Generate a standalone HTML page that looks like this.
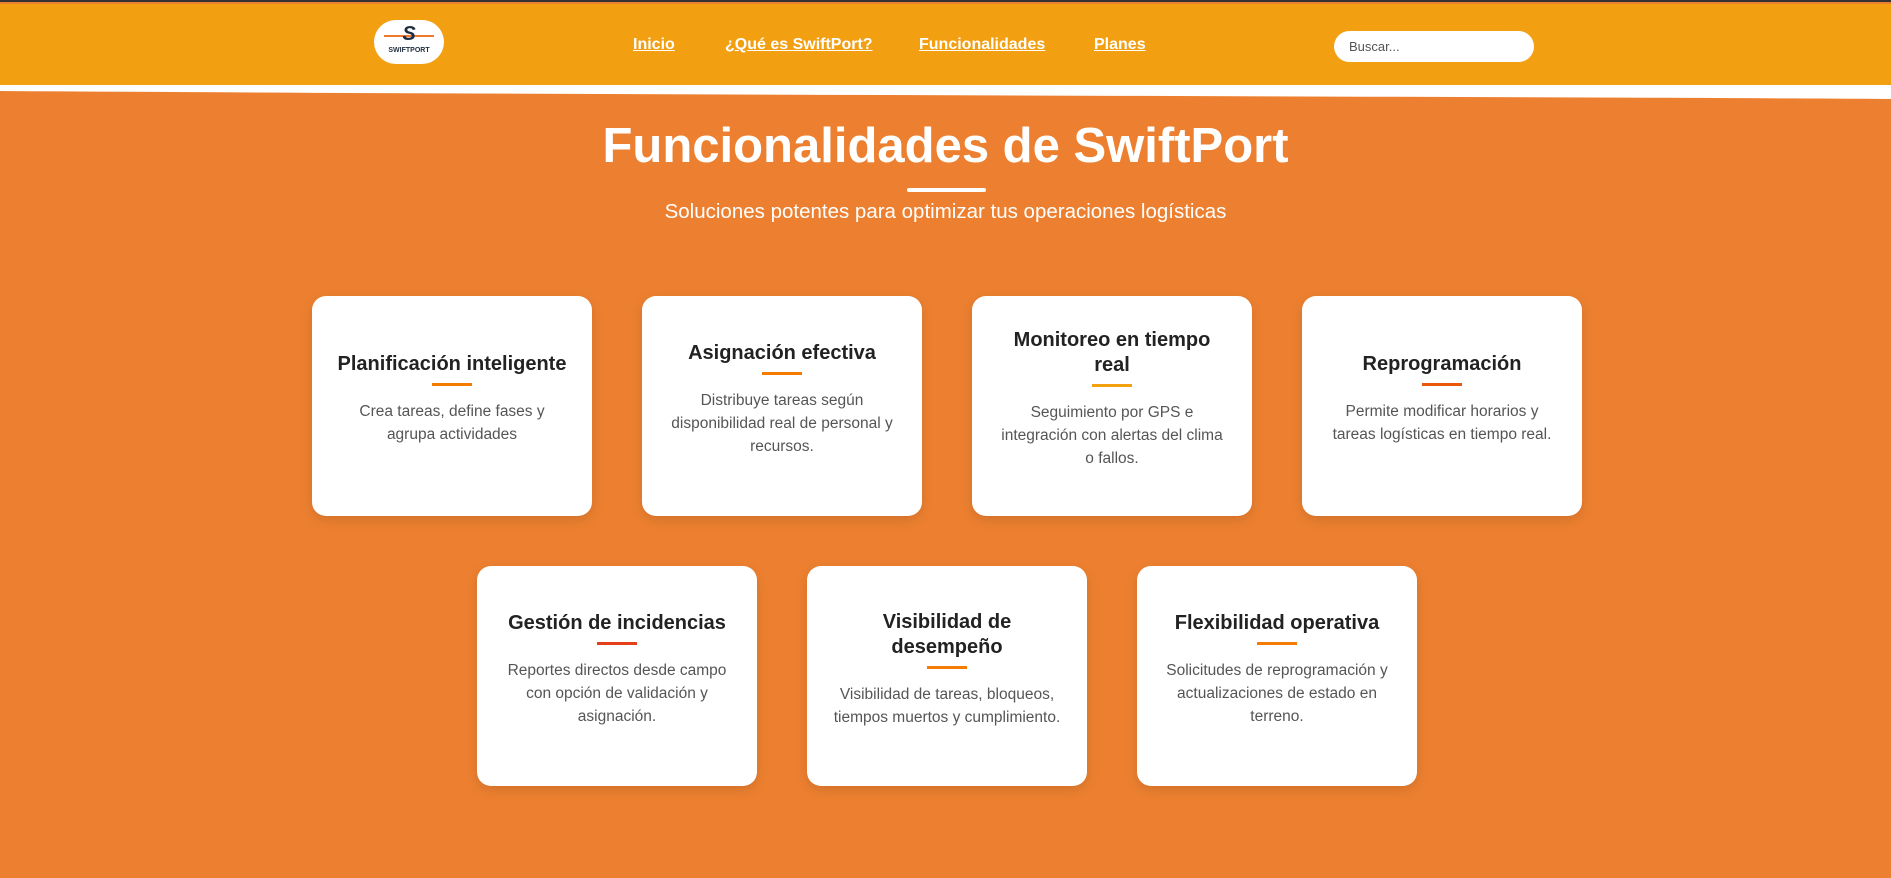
<!DOCTYPE html>
<html><head><meta charset="utf-8"><style>
*{margin:0;padding:0;box-sizing:border-box}
body{width:1891px;height:878px;overflow:hidden;background:#ED8030;font-family:"Liberation Sans",sans-serif;position:relative;border-top:2px solid #333}
.hdr{position:absolute;left:0;top:2px;width:1891px;height:81px;background:#F39F12}
.logo{position:absolute;left:374px;top:16px;width:70px;height:44px;background:#fff;border-radius:22px;text-align:center}
.logo .s{font-weight:bold;font-style:italic;font-size:20px;color:#1f2d3d;position:relative;top:3px}
.logo .l{position:absolute;left:10px;top:15px;width:50px;height:2px;background:#ee7a30}
.logo .t{font-size:7px;font-weight:bold;color:#1f2d3d;margin-top:4px}
.nav a{position:absolute;top:32px;color:#fff;font-weight:bold;font-size:16px;text-decoration:underline}
.search{position:absolute;left:1334px;top:27px;width:200px;height:31px;background:#fff;border-radius:16px;font-size:13px;color:#555;padding:8px 15px}
.wave{position:absolute;left:0;top:83px;width:1891px;height:14px}
h1{position:absolute;top:116px;width:100%;text-align:center;color:#fff;font-size:49px;font-weight:bold}
.ul{position:absolute;left:907px;top:186px;width:79px;height:4px;background:#fff;border-radius:2px}
.sub{position:absolute;top:198px;width:100%;text-align:center;color:#fff;font-size:20.5px}
.card{position:absolute;width:280px;height:220px;background:#fff;border-radius:14px;box-shadow:0 4px 12px rgba(0,0,0,.12);display:flex;flex-direction:column;justify-content:center;align-items:center;text-align:center;padding:0 8px 14px;white-space:nowrap}
.card h3{font-size:20px;color:#222;line-height:25px}
.card i{display:block;width:40px;height:3px;background:#F57C00;margin:6px 0 14px}
.card p{font-size:15.5px;color:#555;line-height:23px}
</style></head><body>
<div class="hdr">
<div class="logo"><div class="l"></div><div class="s">S</div><div class="t">SWIFTPORT</div></div>
<div class="nav"><a style="left:633px">Inicio</a><a style="left:725px">¿Qué es SwiftPort?</a><a style="left:919px">Funcionalidades</a><a style="left:1094px">Planes</a></div>
<div class="search">Buscar...</div>
</div>
<svg class="wave" viewBox="0 0 1891 14" preserveAspectRatio="none"><path d="M0 0H1891V14C1400 11 600 10 0 6Z" fill="#fff"/></svg>
<h1>Funcionalidades de SwiftPort</h1>
<div class="ul"></div>
<div class="sub">Soluciones potentes para optimizar tus operaciones logísticas</div>
<div class="card" style="left:312px;top:294px"><h3>Planificación inteligente</h3><i></i><p>Crea tareas, define fases y<br>agrupa actividades</p></div>
<div class="card" style="left:642px;top:294px"><h3>Asignación efectiva</h3><i></i><p>Distribuye tareas según<br>disponibilidad real de personal y<br>recursos.</p></div>
<div class="card" style="left:972px;top:294px"><h3>Monitoreo en tiempo<br>real</h3><i style="background:#F5A00F"></i><p>Seguimiento por GPS e<br>integración con alertas del clima<br>o fallos.</p></div>
<div class="card" style="left:1302px;top:294px"><h3>Reprogramación</h3><i style="background:#EA580C"></i><p>Permite modificar horarios y<br>tareas logísticas en tiempo real.</p></div>
<div class="card" style="left:477px;top:564px"><h3>Gestión de incidencias</h3><i style="background:#E5401A"></i><p>Reportes directos desde campo<br>con opción de validación y<br>asignación.</p></div>
<div class="card" style="left:807px;top:564px"><h3>Visibilidad de<br>desempeño</h3><i></i><p>Visibilidad de tareas, bloqueos,<br>tiempos muertos y cumplimiento.</p></div>
<div class="card" style="left:1137px;top:564px"><h3>Flexibilidad operativa</h3><i></i><p>Solicitudes de reprogramación y<br>actualizaciones de estado en<br>terreno.</p></div>
</body></html>
